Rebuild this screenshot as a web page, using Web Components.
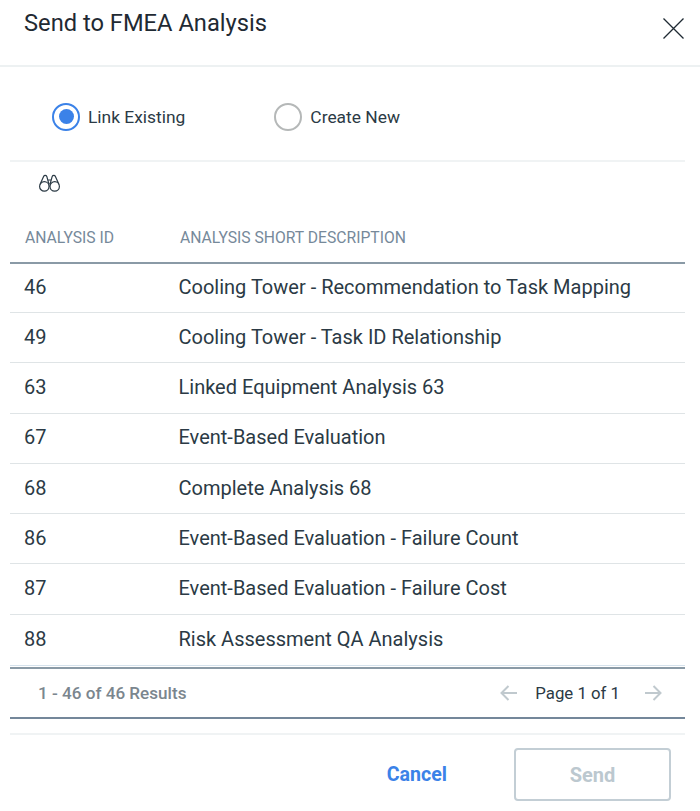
<!DOCTYPE html>
<html>
<head>
<meta charset="utf-8">
<title>Send to FMEA Analysis</title>
<style>
  html, body { margin: 0; padding: 0; background: #fff; }
  body { font-family: Roboto, "Noto Sans", "Liberation Sans", sans-serif; color: #2b3a45; }
</style>
</head>
<body>
<fmea-dialog></fmea-dialog>

<script>
// Titre de la fenêtre avec la croix de fermeture
class DialogHeader extends HTMLElement {
  constructor() {
    super();
    this.attachShadow({ mode: 'open' });
  }
  connectedCallback() {
    this.shadowRoot.innerHTML = `
      <style>
        :host { display: flex; justify-content: space-between; height: 65px; border-bottom: 2px solid #edf1f2; padding: 0 16px 0 24px; }
        h1 { margin: 7px 0 0; font-size: 23.7px; line-height: 32px; font-weight: 400; color: #1f2a33; }
        svg { margin-top: 18px; width: 21px; height: 21px; }
      </style>
      <h1><slot></slot></h1>
      <svg viewBox="0 0 21 21"><path d="M0.5 0.5L20.5 20.5M20.5 0.5L0.5 20.5" stroke="#1f2a33" stroke-width="1.3" fill="none"/></svg>
    `;
  }
}
customElements.define('dialog-header', DialogHeader);

// Bouton radio
class RadioOption extends HTMLElement {
  constructor() {
    super();
    this.attachShadow({ mode: 'open' });
  }
  connectedCallback() {
    const on = this.hasAttribute('checked');
    this.shadowRoot.innerHTML = `
      <style>
        :host { display: flex; align-items: center; gap: 8px; font-size: 17.4px; color: #2b3a45; }
        .ring { box-sizing: border-box; width: 28px; height: 28px; border-radius: 50%; display: flex; align-items: center; justify-content: center;
                border: 2px solid ${on ? '#3b82e8' : '#b5b8b8'}; }
        .dot { width: 15px; height: 15px; border-radius: 50%; background: #3b82e8; }
      </style>
      <span class="ring">${on ? '<span class="dot"></span>' : ''}</span>
      <span><slot></slot></span>
    `;
  }
}
customElements.define('radio-option', RadioOption);

// Ligne du tableau
class ResultRow extends HTMLElement {
  constructor() {
    super();
    this.attachShadow({ mode: 'open' });
  }
  connectedCallback() {
    this.shadowRoot.innerHTML = `
      <style>
        :host { display: grid; grid-template-columns: 168.5px 1fr; box-sizing: border-box; height: 50.3px; padding-bottom: 2px; align-items: center;
                border-bottom: 1px solid #dfe4e6; font-size: 20px; color: #2b3a45; }
        span { padding-left: 14px; }
        span + span { padding-left: 0; }
      </style>
      <span>${this.getAttribute('rid')}</span>
      <span><slot></slot></span>
    `;
  }
}
customElements.define('result-row', ResultRow);

// Pied du tableau avec la pagination
class TablePager extends HTMLElement {
  constructor() {
    super();
    this.attachShadow({ mode: 'open' });
  }
  connectedCallback() {
    const arrow = d => `<svg width="17" height="16" viewBox="0 0 17 16"><path d="${d}" stroke="#c0c9ce" stroke-width="2" fill="none"/></svg>`;
    this.shadowRoot.innerHTML = `
      <style>
        :host { display: flex; align-items: center; justify-content: space-between; height: 48px; border-top: 2px solid #8a9aa6; border-bottom: 2px solid #74879a;
                padding: 0 23px 0 28px; font-size: 17.1px; }
        .count { color: #7b868e; font-weight: 500; }
        .pages { display: flex; align-items: center; color: #2b3a45; font-size: 16.8px; }
        .pages span { margin: 0 25px 0 18px; }
      </style>
      <span class="count"><slot></slot></span>
      <span class="pages">
        ${arrow('M8.5 1L1.5 8L8.5 15M1.5 8H17')}
        <span>${this.getAttribute('page')}</span>
        ${arrow('M8.5 1L15.5 8L8.5 15M15.5 8H0')}
      </span>
    `;
  }
}
customElements.define('table-pager', TablePager);

// La fenêtre complète
class FmeaDialog extends HTMLElement {
  constructor() {
    super();
    this.attachShadow({ mode: 'open' });
  }
  connectedCallback() {
    const rows = [
      ['46', 'Cooling Tower - Recommendation to Task Mapping'],
      ['49', 'Cooling Tower - Task ID Relationship'],
      ['63', 'Linked Equipment Analysis 63'],
      ['67', 'Event-Based Evaluation'],
      ['68', 'Complete Analysis 68'],
      ['86', 'Event-Based Evaluation - Failure Count'],
      ['87', 'Event-Based Evaluation - Failure Cost'],
      ['88', 'Risk Assessment QA Analysis']
    ];
    this.shadowRoot.innerHTML = `
      <style>
        :host { display: block; width: 700px; height: 811px; overflow: hidden; }
        .body { padding: 0 15px 0 10px; }
        .radios { display: flex; gap: 89px; height: 95px; padding: 6px 0 0 42px; box-sizing: border-box; align-items: center; border-bottom: 2px solid #f0f3f4; }
        .tool { height: 44px; padding: 12px 0 0 29px; box-sizing: border-box; }
        .tool svg { display: block; width: 21px; height: 18px; }
        .head { display: grid; grid-template-columns: 170px 1fr; height: 58px; box-sizing: border-box; padding-top: 21px; border-bottom: 2px solid #8a9aa6;
                font-size: 15.7px; color: #76899a; line-height: 21px; }
        .head span:first-child { padding-left: 15px; }
        .rows { border-bottom: 1px solid #d5e2ec; }
        .rows result-row:first-child { height: 49px; padding-bottom: 2px; }
        .rows result-row:last-child { border-bottom: 0; }
        .gap { height: 1px; }
        .sep { height: 2px; background: #f0f3f4; margin-top: 14px; }
        .actions { display: flex; justify-content: flex-end; align-items: center; gap: 67px; padding: 13px 14px 0 0; }
        .cancel { color: #3b82e8; font-weight: 700; font-size: 19.6px; }
        .send { box-sizing: border-box; width: 157px; height: 53px; border: 2px solid #c3ced5; border-radius: 4px; color: #bcc8cf; font-weight: 700; font-size: 20px;
                display: flex; align-items: center; justify-content: center; }
      </style>
      <dialog-header>Send to FMEA Analysis</dialog-header>
      <div class="body">
        <div class="radios">
          <radio-option checked>Link Existing</radio-option>
          <radio-option>Create New</radio-option>
        </div>
        <div class="tool">
          <svg viewBox="0 0 21 18" fill="none" stroke="#2b3a45" stroke-width="1.2">
            <circle cx="5.3" cy="12.4" r="4.7"/><circle cx="15.7" cy="12.4" r="4.7"/>
            <path d="M1 10.5L4.6 2.4C5.2 1 7.2 1 7.8 2.4L10 10.5M20 10.5L16.4 2.4C15.8 1 13.8 1 13.2 2.4L11 10.5M10 12H11M8.5 6H12.5"/>
          </svg>
        </div>
        <div class="head"><span>ANALYSIS ID</span><span>ANALYSIS SHORT DESCRIPTION</span></div>
        <div class="rows">
          ${rows.map(r => `<result-row rid="${r[0]}">${r[1]}</result-row>`).join('')}
        </div>
        <div class="gap"></div>
        <table-pager page="Page 1 of 1">1 - 46 of 46 Results</table-pager>
        <div class="sep"></div>
        <div class="actions">
          <span class="cancel">Cancel</span>
          <span class="send">Send</span>
        </div>
      </div>
    `;
  }
}
customElements.define('fmea-dialog', FmeaDialog);
</script>
</body>
</html>
